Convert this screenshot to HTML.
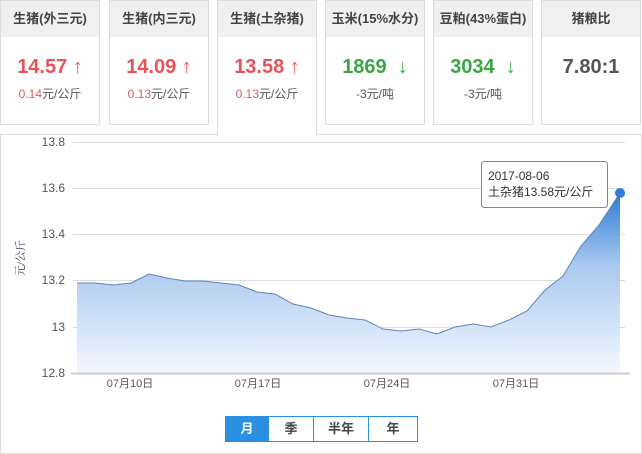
<!DOCTYPE html>
<html><head><meta charset="utf-8"><style>
*{margin:0;padding:0;box-sizing:border-box}
body{width:642px;height:450px;background:#fff;font-family:"Liberation Sans","Noto Sans CJK SC",sans-serif;position:relative;overflow:hidden}
.c{position:absolute;top:0;height:125px;width:100px;border:1px solid #ddd;background:#fff;text-align:center}
.c .h{height:36px;background:#f0f0f0;line-height:36px;font-size:13px;font-weight:bold;color:#444}
.c .v{margin-top:18px;font-size:20px;font-weight:bold;line-height:24px}
.c .s{font-size:12px;color:#555;margin-top:6px}
.r{color:#e8535a}.g{color:#3aa646}
.act{height:136px;border-bottom:none;z-index:2}
.panel{position:absolute;left:0;top:134px;width:642px;height:320px;border:1px solid #ddd}
.btns{position:absolute;left:225px;top:416px;display:flex;border:1px solid #2a8fe0;height:26px;font-size:13px;font-weight:bold;color:#444}
.btns div{line-height:24px;text-align:center;border-left:1px solid #2a8fe0}
</style></head><body>
<div class="c" style="left:0"><div class="h">生猪(外三元)</div><div class="v r">14.57 ↑</div><div class="s"><span class="r">0.14</span>元/公斤</div></div>
<div class="c" style="left:109px"><div class="h">生猪(内三元)</div><div class="v r">14.09 ↑</div><div class="s"><span class="r">0.13</span>元/公斤</div></div>
<div class="c act" style="left:217px"><div class="h">生猪(土杂猪)</div><div class="v r">13.58 ↑</div><div class="s"><span class="r">0.13</span>元/公斤</div></div>
<div class="c" style="left:325px"><div class="h">玉米(15%水分)</div><div class="v g">1869 &nbsp;↓</div><div class="s">-3元/吨</div></div>
<div class="c" style="left:433px"><div class="h">豆粕(43%蛋白)</div><div class="v g">3034 &nbsp;↓</div><div class="s">-3元/吨</div></div>
<div class="c" style="left:541px"><div class="h">猪粮比</div><div class="v" style="color:#555">7.80:1</div></div>
<div class="panel"></div>
<svg style="position:absolute;left:0;top:0" width="642" height="450">
<defs><linearGradient id="gr" x1="0" y1="0" x2="0" y2="1"><stop offset="0" stop-color="#2f7bd6"/><stop offset="0.4" stop-color="#a9c9f0"/><stop offset="1" stop-color="#f4f8fe"/></linearGradient></defs>
<g stroke="#ddd" stroke-width="1">
<line x1="73" y1="142.5" x2="625" y2="142.5"/><line x1="73" y1="188.5" x2="625" y2="188.5"/><line x1="73" y1="234.5" x2="625" y2="234.5"/><line x1="73" y1="280.5" x2="625" y2="280.5"/><line x1="73" y1="327.5" x2="625" y2="327.5"/>
</g>
<path d="M77,283 L95,283 113,285 131,283 149,274 167,278 185,281 203,281 221,283 239,285 257,292 275,294 293,304 311,308 329,315 347,318 365,320 383,329 401,331 419,329 437,334 455,327 473,324 491,327 509,320 527,311 545,290 563,276 581,246 599,225 620,193 L620,373 L77,373 Z" fill="url(#gr)"/>
<path d="M77,283 L95,283 113,285 131,283 149,274 167,278 185,281 203,281 221,283 239,285 257,292 275,294 293,304 311,308 329,315 347,318 365,320 383,329 401,331 419,329 437,334 455,327 473,324 491,327 509,320 527,311 545,290 563,276 581,246 599,225 620,193" fill="none" stroke="#5f86b8" stroke-width="1"/>
<line x1="71" y1="373.5" x2="630" y2="373.5" stroke="#ccc" stroke-width="2"/>
<circle cx="620" cy="193" r="5" fill="#2f7bd6"/>
<g font-size="12" fill="#555" font-family="Liberation Sans,sans-serif" text-anchor="end">
<text x="65" y="146">13.8</text><text x="65" y="192">13.6</text><text x="65" y="238">13.4</text><text x="65" y="284">13.2</text><text x="65" y="331">13</text><text x="65" y="377">12.8</text></g>
<g font-size="11" fill="#555" text-anchor="middle" font-family="Liberation Sans,Noto Sans CJK SC,sans-serif">
<text x="130" y="387">07月10日</text><text x="258" y="387">07月17日</text><text x="387" y="387">07月24日</text><text x="516" y="387">07月31日</text></g>
<text transform="translate(24,258) rotate(-90)" font-size="11" fill="#335" font-family="Liberation Serif,Noto Serif CJK SC,serif" text-anchor="middle">元/公斤</text>
<rect x="481.5" y="161.5" width="126" height="46" rx="3" fill="#fff" stroke="#5b8ed0"/>
<text x="488" y="180" font-size="12" fill="#333" font-family="Liberation Sans,Noto Sans CJK SC,sans-serif">2017-08-06</text>
<text x="488" y="196" font-size="12" fill="#333" font-family="Liberation Sans,Noto Sans CJK SC,sans-serif">土杂猪13.58元/公斤</text>
</svg>
<div class="btns"><div style="width:42px;background:#2a8fe0;color:#fff;border-left:none">月</div><div style="width:45px">季</div><div style="width:55px">半年</div><div style="width:49px">年</div></div>
</body></html>
